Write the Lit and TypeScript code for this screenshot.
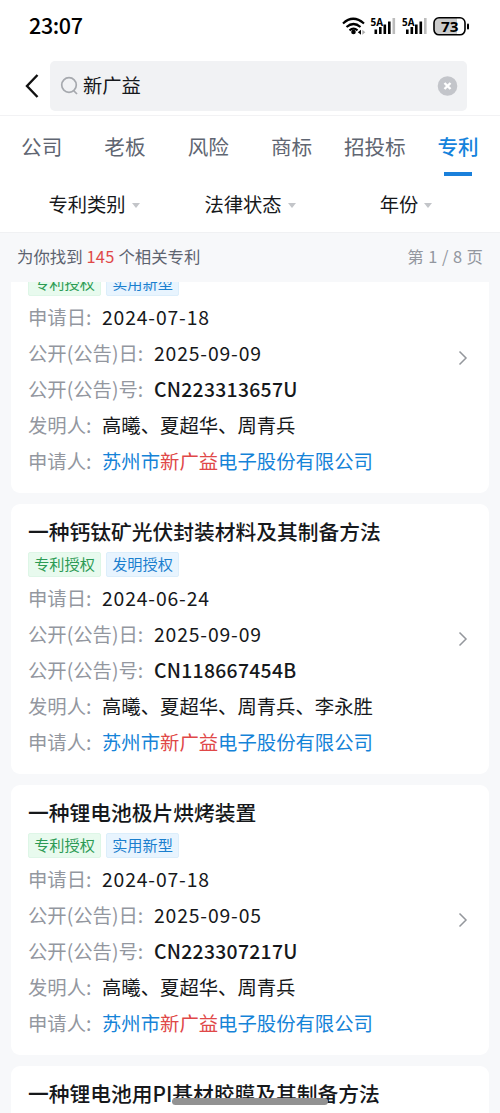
import { LitElement, html, css, svg } from "lit";
import { customElement, property } from "lit/decorators.js";

interface Patent {
  title: string;
  kind: string;
  applied: string;
  published: string;
  code: string;
  inventors: string;
}

const patents: Patent[] = [
  { title: "", kind: "实用新型", applied: "2024-07-18", published: "2025-09-09", code: "CN223313657U", inventors: "高曦、夏超华、周青兵" },
  { title: "一种钙钛矿光伏封装材料及其制备方法", kind: "发明授权", applied: "2024-06-24", published: "2025-09-09", code: "CN118667454B", inventors: "高曦、夏超华、周青兵、李永胜" },
  { title: "一种锂电池极片烘烤装置", kind: "实用新型", applied: "2024-07-18", published: "2025-09-05", code: "CN223307217U", inventors: "高曦、夏超华、周青兵" },
  { title: "一种锂电池用PI基材胶膜及其制备方法", kind: "", applied: "", published: "", code: "", inventors: "" },
];

@customElement("patent-card")
class PatentCard extends LitElement {
  @property({ attribute: false }) patent!: Patent;

  static styles = css`
    :host { display: block; flex: none; }
    .card { box-sizing: border-box; height: 270px; background: #fff; border-radius: 9px; padding: 12px 20px 0 17px; display: flex; }
    .body { flex: 1; min-width: 0; }
    .title { height: 32px; line-height: 30px; font-size: 20.75px; font-weight: 500; color: #16181b; white-space: nowrap; }
    .tags { display: flex; gap: 5px; margin: 4px 0 4px; height: 25px; }
    .tag { box-sizing: border-box; width: 73px; height: 25px; line-height: 21px; text-align: center; font-size: 15.2px; border-radius: 2px; border: 1px solid; white-space: nowrap; }
    .green { color: #2c9b54; background: #e8faee; border-color: #def6e7; }
    .blue { color: #1a7fce; background: #e8f4fe; border-color: #dceefb; }
    .row { display: flex; height: 36px; line-height: 35px; font-size: 19.35px; white-space: nowrap; color: #16181b; }
    .label { color: #93979f; width: 74px; flex: none; }
    .long { width: 126px; }
    .date { letter-spacing: 0.85px; }
    .code { letter-spacing: 0.3px; font-weight: 500; }
    .link { color: #1583d8; }
    .hit { color: #e04848; }
    .arrow { align-self: center; margin-top: -12px; flex: none; }
  `;

  render() {
    const p = this.patent;
    return html`<div class="card">
      <div class="body">
        <div class="title">${p.title}</div>
        ${p.kind
          ? html`<div class="tags"><span class="tag green">专利授权</span><span class="tag blue">${p.kind}</span></div>
              <div class="row"><span class="label">申请日:</span><span class="date">${p.applied}</span></div>
              <div class="row"><span class="label long">公开(公告)日:</span><span class="date">${p.published}</span></div>
              <div class="row"><span class="label long">公开(公告)号:</span><span class="code">${p.code}</span></div>
              <div class="row"><span class="label">发明人:</span><span>${p.inventors}</span></div>
              <div class="row"><span class="label">申请人:</span><span class="link">苏州市<span class="hit">新广益</span>电子股份有限公司</span></div>`
          : ""}
      </div>
      <svg class="arrow" width="12" height="16" viewBox="0 0 12 16" fill="none" stroke="#94979c" stroke-width="1.5"><path d="M2.5 1.5 9 8l-6.500 6.500" /></svg>
    </div>`;
  }
}

@customElement("app-root")
class AppRoot extends LitElement {
  static styles = css`
    :host { display: flex; flex-direction: column; position: relative; width: 500px; height: 1113px; overflow: hidden; background: #f7f8fa; font-family: "Noto Sans CJK SC", sans-serif; }
    .status { height: 55px; flex: none; background: #fff; display: flex; align-items: flex-start; justify-content: space-between; padding: 0 30px 0 29px; }
    .time { font-size: 21.5px; font-weight: 500; line-height: 30px; margin-top: 10px; letter-spacing: -0.35px; color: #000; }
    .icons { margin-top: 14px; }
    .net { font: 700 10.5px "Noto Sans", sans-serif; }
    .level { font: 700 14.5px "Open Sans", sans-serif; }
    .head { box-sizing: border-box; height: 61px; flex: none; background: #fff; border-bottom: 1px solid #f2f2f4; display: flex; align-items: flex-start; padding: 6px 33px 0 24px; gap: 10px; }
    .back { margin-top: 12px; flex: none; }
    .box { flex: 1; height: 50px; background: #f1f2f4; border-radius: 5px; display: flex; align-items: center; padding: 0 9px 0 10px; box-sizing: border-box; }
    .query { flex: 1; font-size: 19.3px; line-height: 30px; margin: -2px 0 0 4px; color: #16181b; }
    .tabs { height: 62px; flex: none; background: #fff; display: flex; }
    .tab { width: 83.300px; flex: none; display: flex; flex-direction: column; align-items: center; font-size: 20.600px; line-height: 60px; color: #5f6672; white-space: nowrap; }
    .on { color: #1583dc; font-weight: 500; }
    .bar { width: 28px; height: 4px; background: #1a80db; margin-top: -4px; }
    .filters { box-sizing: border-box; height: 55px; flex: none; background: #fff; border-bottom: 1px solid #f0f1f3; display: grid; grid-template-columns: 188px 124px 188px; }
    .filter { display: flex; justify-content: center; align-items: flex-start; gap: 6px; font-size: 19.3px; line-height: 52px; color: #16181b; white-space: nowrap; }
    .caret { width: 0; height: 0; border: 4.500px solid transparent; border-top: 5px solid #c3c5c9; border-bottom: 0; margin-top: 25px; }
    .summary { height: 49px; flex: none; display: flex; justify-content: space-between; padding: 0 17px; font-size: 16.400px; line-height: 47px; color: #5d6370; }
    .count { color: #e04848; margin: 0 4px; letter-spacing: 0.2px; }
    .pages { color: #93979f; word-spacing: 0.9px; }
    .list { flex: 1; min-height: 0; overflow: hidden; padding: 0 11px; }
    .stack { display: flex; flex-direction: column; gap: 11px; margin-top: -59px; }
    .home { position: absolute; left: 172px; top: 1098px; width: 156px; height: 7px; border-radius: 4px; background: #929292; }
  `;

  render() {
    const bars = (x: number) => svg`<g fill="#000"><rect x=${x} y="15.500" width="2.600" height="4.500"/><rect x=${x + 4.5} y="13" width="2.600" height="7"/><rect x=${x + 9} y="10.500" width="2.600" height="9.500"/><rect x=${x + 13.5} y="7.500" width="2.600" height="12.500"/><rect x=${x + 18} y="4" width="2.600" height="16" fill="#bcbcbc"/></g>`;
    return html`
      <div class="status">
        <div class="time">23:07</div>
        <svg class="icons" width="128" height="24" viewBox="0 0 128 24">
          <g fill="none" stroke="#000" stroke-width="2.200"><path d="M1 9.500q10-9.500 21 0M4.500 13q7-6 14 0M7.500 16.300q4-3.200 8 0"/></g>
          <circle cx="11.500" cy="18" r="2.300"/><path d="m19 15.800-3.200 2.500 3.200 2.500z"/><path d="m20.300 15.800 3 2.500-3 2.500z" fill="#aaa"/>
          ${bars(32.5)}${bars(64)}
          <text class="net" x="28.500" y="11.500" textLength="12.500" lengthAdjust="spacingAndGlyphs">5A</text>
          <text class="net" x="60" y="11.500" textLength="12.500" lengthAdjust="spacingAndGlyphs">5A</text>
          <rect x="92" y="4" width="31" height="16.500" rx="5" fill="#fff"/>
          <path d="M97 4h18v16.500H97a5 5 0 0 1-5-5V9a5 5 0 0 1 5-5z" fill="#ccc"/>
          <rect x="92" y="3.800" width="31" height="17" rx="5" fill="none" stroke="#000" stroke-width="1.600"/>
          <rect x="125" y="9.500" width="2" height="6" rx="1"/>
          <text class="level" x="99" y="17.800" textLength="17.500" lengthAdjust="spacingAndGlyphs">73</text>
        </svg>
      </div>
      <div class="head">
        <svg class="back" width="16" height="26" viewBox="0 0 16 26" fill="none" stroke="#111" stroke-width="2.400"><path d="M13.500 2 3 13l10.500 11"/></svg>
        <div class="box">
          <svg width="19" height="20" viewBox="0 0 19 20" fill="none" stroke="#a6a9ae" stroke-width="1.700"><circle cx="9" cy="9" r="7.300"/><path d="m13.500 14.500 3.500 3.500"/></svg>
          <span class="query">新广益</span>
          <svg width="21" height="21" viewBox="0 0 21 21"><circle cx="10.500" cy="10" r="9.800" fill="#c3c5ca"/><path d="m7.500 7 6 6m0-6-6 6" stroke="#fff" stroke-width="2.400"/></svg>
        </div>
      </div>
      <div class="tabs">
        ${["公司", "老板", "风险", "商标", "招投标"].map((t) => html`<div class="tab">${t}</div>`)}
        <div class="tab on">专利<span class="bar"></span></div>
      </div>
      <div class="filters">
        ${["专利类别", "法律状态", "年份"].map((t) => html`<div class="filter">${t}<span class="caret"></span></div>`)}
      </div>
      <div class="summary">
        <div>为你找到<span class="count">145</span>个相关专利</div>
        <div class="pages">第 1 / 8 页</div>
      </div>
      <div class="list"><div class="stack">${patents.map((p) => html`<patent-card .patent=${p}></patent-card>`)}</div></div>
      <div class="home"></div>
    `;
  }
}
